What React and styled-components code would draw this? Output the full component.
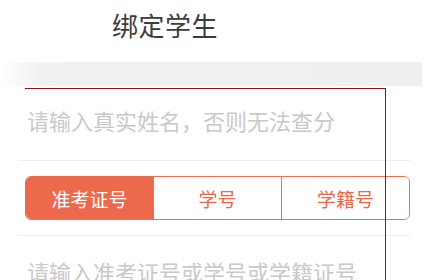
import styled, { createGlobalStyle } from 'styled-components';

const Global = createGlobalStyle`
    body {
        margin: 0;
        background: #fff;
        font-family: "Noto Sans CJK SC", "Noto Sans", sans-serif;
    }
`;

const Page = styled.div`
    position: relative;
    width: 434px;
    height: 280px;
    overflow: hidden;
    background: #fff;
`;

const Header = styled.div`
    height: 62px;
    display: flex;
    align-items: center;
    padding-left: 112px;
    padding-bottom: 14px;
    box-sizing: border-box;
`;

const Title = styled.h1`
    margin: 0;
    font-size: 26px;
    font-weight: 400;
    color: #3c3c3c;
    letter-spacing: 0.5px;
`;

const Band = styled.div`
    width: 422px;
    height: 24px;
    background: linear-gradient(90deg, #fff 0px, #f1f1f1 40px, #efefef 100%);
`;

const Form = styled.div`
    padding: 0 24px 0 18px;
`;

const Field = styled.div`
    height: ${({ $h }) => $h}px;
    display: flex;
    align-items: center;
    padding-left: 9px;
    padding-bottom: ${({ $pb }) => $pb || 0}px;
    box-sizing: border-box;
    font-size: 22px;
    color: #c9c9c9;
    border-bottom: ${({ $line }) => ($line ? '1px solid #ededed' : 'none')};
`;

const SegmentRow = styled.div`
    height: 75px;
    display: flex;
    align-items: center;
    padding-left: 7px;
    border-bottom: 1px solid #ededed;
    box-sizing: border-box;
`;

const Segments = styled.div`
    display: flex;
    width: 385px;
    height: 44px;
    border: 1px solid #e9714f;
    border-radius: 6px;
    overflow: hidden;
    box-sizing: border-box;
`;

const Segment = styled.div`
    flex: 1;
    display: flex;
    align-items: center;
    justify-content: center;
    font-size: 19px;
    color: ${({ $active }) => ($active ? '#fff' : '#e8694a')};
    background: ${({ $active }) => ($active ? '#ec6a4b' : '#fff')};
    border-left: ${({ $first }) => ($first ? 'none' : '1px solid #e9714f')};
`;

const Marker = styled.div`
    position: absolute;
    left: 25px;
    top: 88px;
    width: 360px;
    height: 300px;
    border-top: 1px solid #8e1212;
    border-right: 1px solid #8e1212;
`;

export default function App() {
    return (
        <Page>
            <Global />
            <Header>
                <Title>绑定学生</Title>
            </Header>
            <Band />
            <Form>
                <Field $h={75} $pb={7} $line>请输入真实姓名，否则无法查分</Field>
                <SegmentRow>
                    <Segments>
                        <Segment $active $first>准考证号</Segment>
                        <Segment>学号</Segment>
                        <Segment>学籍号</Segment>
                    </Segments>
                </SegmentRow>
                <Field $h={70}>请输入准考证号或学号或学籍证号</Field>
            </Form>
            <Marker />
        </Page>
    );
}
